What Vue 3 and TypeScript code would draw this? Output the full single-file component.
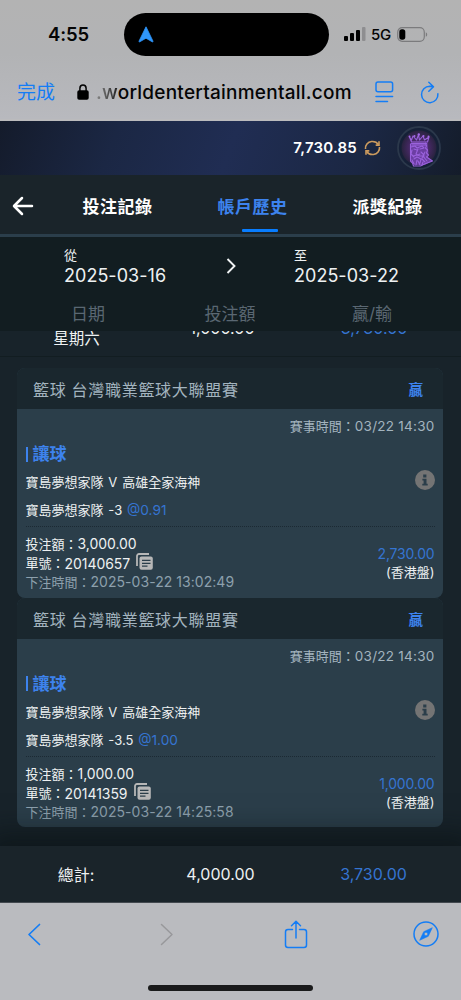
<script setup lang="ts">
interface Bet {
  id: string
  pick: string
  odds: string
  stake: string
  placed: string
  win: string
}

const league = '籃球 台灣職業籃球大聯盟賽'
const teams = '寶島夢想家隊 V 高雄全家海神'
const bets: Bet[] = [
  { id: '20140657', pick: '寶島夢想家隊 -3', odds: '@0.91', stake: '3,000.00', placed: '2025-03-22 13:02:49', win: '2,730.00' },
  { id: '20141359', pick: '寶島夢想家隊 -3.5', odds: '@1.00', stake: '1,000.00', placed: '2025-03-22 14:25:58', win: '1,000.00' },
]
</script>

<template>
  <div class="phone">
    <header class="browser">
      <div class="status">
        <span class="clock">4:55</span>
        <div class="island">
          <svg width="16" height="17" viewBox="0 0 16 17"><path d="M8 .8 15 15.2c.2.6-.3.9-.8.6L8 12.2 1.800 15.800c-.5.3-1 0-.8-.6z" fill="#2f96fb" stroke="#2f96fb" stroke-width=".8" stroke-linejoin="round" /></svg>
        </div>
        <svg class="signal" width="22" height="15" viewBox="0 0 22 15">
          <rect x="0" y="9" width="4" height="5" rx="1" /><rect x="6" y="6" width="4" height="8" rx="1" /><rect x="12" y="3" width="4" height="11" rx="1" /><rect x="18" y="0" width="3.500" height="14" rx="1" fill="#8e8e90" />
        </svg>
        <span class="net">5G</span>
        <svg class="battery" width="31" height="15" viewBox="0 0 31 15">
          <rect x=".7" y=".7" width="26.600" height="13.600" rx="4.500" fill="none" stroke="#7b7b7d" stroke-width="1.200" />
          <rect x="2.300" y="2.300" width="6" height="10.400" rx="2.600" /><path d="M28.800 5.200c1.900.8 1.900 3.800 0 4.600z" fill="#7b7b7d" />
        </svg>
      </div>
      <div class="address">
        <span class="done">完成</span>
        <svg class="lock" width="12" height="16" viewBox="0 0 12 16"><rect x=".3" y="6.300" width="11.400" height="9.400" rx="1.800" /><path d="M2.900 7V4.300a3.100 3.300 0 0 1 6.200 0V7" fill="none" stroke="#050505" stroke-width="1.500" /></svg>
        <span class="url"><i>.w</i>orldentertainmentall.com</span>
        <svg class="reader" width="19" height="22" viewBox="0 0 19 22" fill="none" stroke="#147df5" stroke-width="1.500" stroke-linecap="round"><rect x="1" y="1" width="16.600" height="9.700" rx="2" /><path d="M1 15.500h16.600M1 20.500h11.500" /></svg>
        <svg class="reload" width="20" height="23" viewBox="0 0 20 23" fill="none" stroke="#147df5" stroke-width="1.500" stroke-linecap="round" stroke-linejoin="round"><path d="M17.900 12.800A8.200 8.200 0 1 1 9.700 5.300l3.400.3M8.800 1.200l4.700 4.500-4.700 4.600" /></svg>
      </div>
    </header>

    <section class="account">
      <span class="balance">7,730.85</span>
      <svg class="sync" width="17" height="16" viewBox="0 0 17 16" fill="none" stroke="#cc9b5e" stroke-width="1.600"><path d="M1.500 9A6.700 6.700 0 0 1 7.500 1.500C10.500 1.200 13 2.300 14.300 4.500M15.500 7A6.700 6.700 0 0 1 9.500 14.500C6.500 14.800 4 13.700 2.700 11.500" /><path d="M15 1.200v3.900h-3.300M2 14.800v-3.900h3.300" /></svg>
      <svg class="avatar" width="46" height="46" viewBox="0 0 46 46" fill="none" stroke-linecap="round" stroke-linejoin="round">
        <defs><radialGradient id="glow"><stop offset="0" stop-color="#60358b" /><stop offset=".65" stop-color="#40275c" /><stop offset="1" stop-color="#28233e" /></radialGradient></defs>
        <circle cx="23" cy="23" r="21" fill="#152037" stroke="#2b384b" stroke-width="1.800" /><circle cx="23" cy="23" r="17.500" fill="url(#glow)" />
        <path d="M14.500 18h17l1 10-1 4 5 4-8 4H18l-3.500-6z" fill="#6c3ea3" />
        <g stroke="#9a62dc" stroke-width="1.100">
          <path d="m13.500 12 2 5h16l1.500-5-4.500 3-1.500-4-3.500 4-1-5-2 5-3.500-4-1.500 4zM15.500 18.500h15M16 20h14" />
          <path d="M14.500 19v17l2 2 1 3h7l4-2 8-3-3-2-3-2 2-2-2-2 1-3-2-2 1-2-1-3" />
          <path d="m15 22 4-1 2 2 5-2 2 2M18 24l3 1M24 24l4-1M22 24l-2 5 2 1 2-1M16 25l-1 4 3 3M25 27l3 3-2 3M17 31l4-1 3 1 4 0M18 34l3-2 4 2-1 4M16 35l2 4M21 35l-1 5M26 34l3 3M29 27l-2 4 4 5M22 36l2 4M27 37l-1 3" />
        </g>
        <g fill="#a36be6"><circle cx="13.500" cy="11.500" r="1" /><circle cx="18.500" cy="11" r="1" /><circle cx="22.800" cy="9.500" r="1.200" /><circle cx="27.500" cy="11" r="1" /><circle cx="32.500" cy="11.500" r="1" /></g>
      </svg>
    </section>

    <nav class="tabs">
      <svg class="back" width="22" height="20" viewBox="0 0 22 20" fill="none" stroke="#fff" stroke-width="2.500" stroke-linecap="round" stroke-linejoin="round"><path d="M10 2 2 10l8 8M2.500 10H20" /></svg>
      <span class="tab">投注記錄</span>
      <span class="tab active">帳戶歷史</span>
      <span class="tab">派獎紀錄</span>
    </nav>

    <section class="range">
      <div class="date"><small>從</small><span>2025-03-16</span></div>
      <svg class="chev" width="11" height="16" viewBox="0 0 11 16" fill="none" stroke="#f0f3f4" stroke-width="1.900"><path d="m1.500 1 7 7-7 7" /></svg>
      <div class="date to"><small>至</small><span>2025-03-22</span></div>
    </section>
    <div class="heads"><span>日期</span><span>投注額</span><span>贏/輸</span></div>

    <main class="list">
      <div class="day"><span class="weekday">星期六</span><span class="sum">1,000.00</span><span class="sum gain">3,730.00</span></div>
      <div class="cards">
        <article v-for="bet in bets" :key="bet.id" class="card">
          <div class="card-head"><span>{{ league }}</span><b>贏</b></div>
          <div class="card-body">
            <div class="time">賽事時間：<em>03/22 14:30</em></div>
            <div class="market">讓球</div>
            <div class="teams"><span>{{ teams }}</span>
              <svg width="20" height="20" viewBox="0 0 20 20"><circle cx="10" cy="10" r="10" fill="#747474" /><path d="M8.200 4.400h3.200v3H8.200zM7.400 8.700h4.100v5h1.200v1.900H7.300v-1.900h1.300v-3.100H7.400z" fill="#2b3e4a" /></svg>
            </div>
            <div class="pick">{{ bet.pick }} <span>{{ bet.odds }}</span></div>
            <div class="detail">
              <div>
                <div>投注額：<em>{{ bet.stake }}</em></div>
                <div class="slip">單號：<em>{{ bet.id }}</em>
                  <svg width="17" height="17" viewBox="0 0 17 17"><path d="M1 13V3a2 2 0 0 1 2-2h10" fill="none" stroke="#b7b7b7" stroke-width="1.800" /><rect x="3.500" y="3.500" width="13.300" height="13.300" rx="2" fill="#b7b7b7" /><path d="M6 7.400h8.500M6 10.300h8.500M6 13.200h5.500" stroke="#2b3e4a" stroke-width="1.300" /></svg>
                </div>
                <div class="placed">下注時間：<em>{{ bet.placed }}</em></div>
              </div>
              <div class="result"><em>{{ bet.win }}</em><span>(香港盤)</span></div>
            </div>
          </div>
        </article>
      </div>
    </main>

    <section class="total"><span>總計:</span><span>4,000.00</span><span class="gain">3,730.00</span></section>

    <footer class="toolbar">
      <div class="tools">
        <svg width="14" height="23" viewBox="0 0 14 23" fill="none" stroke="#147df5" stroke-width="1.700" stroke-linecap="round" stroke-linejoin="round"><path d="M12.500 1.500 2 11.500l10.500 10" /></svg>
        <svg class="fwd" width="14" height="23" viewBox="0 0 14 23" fill="none" stroke="#98989b" stroke-width="1.500" stroke-linecap="round" stroke-linejoin="round"><path d="m1.500 1.500 10.500 10-10.500 10" /></svg>
        <svg class="share" width="24" height="29" viewBox="0 0 24 29" fill="none" stroke="#147df5" stroke-width="1.500" stroke-linecap="round" stroke-linejoin="round"><path d="M8.500 9.500H4a2.500 2.500 0 0 0-2.500 2.500v13A2.500 2.500 0 0 0 4 27.500h16a2.500 2.500 0 0 0 2.500-2.500V12A2.500 2.500 0 0 0 20 9.500h-4.500M12 18V1.500M7.500 5.700 12 1.300l4.500 4.400" /></svg>
        <svg class="safari" width="26" height="26" viewBox="0 0 26 26"><circle cx="13" cy="13" r="12" fill="none" stroke="#147df5" stroke-width="1.500" /><path fill-rule="evenodd" d="m19.300 6.700-4 8.600-8.600 4 4-8.600zM13 11.200a1.800 1.800 0 1 0 0 3.600 1.800 1.800 0 0 0 0-3.600z" fill="#147df5" stroke="#147df5" stroke-width=".6" stroke-linejoin="round" /></svg>
      </div>
      <div class="home"></div>
    </footer>
  </div>
</template>

<style>
html, body { background: #1a242a; overflow: hidden; }
</style>

<style scoped>
.phone { width: 461px; height: 1000px; overflow: hidden; display: flex; flex-direction: column; background: #1a242a; color: #eef1f2; font-family: Inter, "Noto Sans CJK TC", sans-serif; }
.phone * { box-sizing: border-box; white-space: nowrap; }
svg { display: block; flex: none; }
em, i { font-style: normal; }
.browser { height: 121px; flex: none; background: linear-gradient(#b3b3b3, #b2b3b5 45%, #b8b9be); color: #050505; border-bottom: 2px solid #bbbbbd; }
.status { display: flex; align-items: center; height: 56px; padding: 13px 0 0 48px; }
.clock { width: 76px; padding-bottom: 1px; font-size: 18.500px; font-weight: 600; letter-spacing: -.1px; }
.island { width: 205px; height: 43px; border-radius: 22px; background: #000; padding: 13px 0 0 14px; }
.signal { margin-left: 15px; }
.net { margin-left: 5px; width: 26px; font-size: 15px; font-weight: 500; letter-spacing: -.2px; }
.address { display: flex; align-items: center; height: 48px; padding: 0 0 0 17px; margin-top: 12px; }
.done { width: 60px; padding-top: 2px; color: #147df5; font-size: 19px; line-height: 28px; }
.url { margin-left: 7px; width: 264px; font-size: 19px; font-weight: 500; letter-spacing: .24px; }
.url i { background: linear-gradient(90deg, #888, #222); background-clip: text; color: transparent; }
.reader { margin-left: 15px; }
.reload { margin-left: 26px; }
.account { height: 54px; flex: none; display: flex; align-items: center; justify-content: flex-end; padding-right: 19px; background: linear-gradient(110deg, #141b2b, #1b2744 25%, #202d53 50%, #1b2743 78%, #141c2a); }
.balance { padding-bottom: 1px; font-size: 15px; font-weight: 600; color: #fff; letter-spacing: .2px; }
.sync { margin-left: 7px; }
.avatar { margin-left: 15px; }
.tabs { height: 62px; flex: none; display: flex; align-items: center; background: #1a242a; border-bottom: 3px solid #2b3e4b; padding: 3px 0 0 12px; }
.back { margin-right: 16px; }
.tab { position: relative; width: 135px; padding-top: 1px; text-align: center; font-size: 17px; line-height: 24px; font-weight: 700; letter-spacing: .5px; color: #fff; }
.active { color: #3d83ee; }
.active::after { content: ""; position: absolute; left: 57px; bottom: -13px; width: 36px; height: 2.500px; border-radius: 1px; background: #087dff; }
.range { height: 57px; flex: none; display: flex; background: #121d21; padding-left: 64px; }
.date { width: 162px; padding-top: 10px; display: flex; flex-direction: column; }
.date small { font-size: 13px; line-height: 17px; }
.date span { font-size: 18px; line-height: 23px; letter-spacing: .03px; }
.chev { margin-top: 21px; }
.to { margin-left: 57px; }
.heads { height: 37px; flex: none; padding: 8px 0 0 17px; display: grid; grid-template-columns: repeat(3, 142px); text-align: center; background: #121d21; color: #5a6772; font-size: 17px; line-height: 24px; }
.list { height: 515px; flex: none; overflow: hidden; background: #18232a; }
.day { height: 26px; display: grid; grid-template-columns: repeat(3, 142px); padding-left: 17px; border-bottom: 1px solid #121d21; text-align: center; }
.weekday { margin-left: -23px; margin-top: -4px; line-height: 24px; font-size: 15.500px; }
.sum { font-size: 16px; margin: -15px 0 0 -16px; line-height: 24px; }
.sum.gain { margin-left: 4px; }
.gain { color: #3574d1; }
.cards { padding: 11px 18px 22px 17px; }
.card { height: 229.500px; border-radius: 8px; overflow: hidden; background: #2b3e4a; }
.card-head { height: 41px; display: flex; justify-content: space-between; padding: 2px 20px 0 16px; line-height: 40px; background: #1a272e; color: #a3b4bf; font-size: 16px; letter-spacing: .7px; }
.card-head b { color: #3d83ee; font-size: 14.500px; letter-spacing: 0; }
.card-body { padding: 8px 8.500px 0; font-size: 13px; }
.time { text-align: right; line-height: 18px; color: #a3b4bf; }
.time em { font-size: 13.500px; letter-spacing: .25px; }
.market { margin-top: 9px; height: 20px; display: flex; align-items: center; color: #3d83ee; font-size: 17px; font-weight: 700; line-height: 20px; }
.market::before { content: ""; width: 2px; height: 15px; margin-right: 5px; background: #3d83ee; }
.teams { margin-top: 6px; height: 26px; line-height: 26px; display: flex; justify-content: space-between; word-spacing: 1.200px; }
.teams span { margin-top: -1px; }
.pick { height: 31px; line-height: 29px; border-bottom: 1.500px dotted #1b2933; word-spacing: 1.200px; }
.pick span { color: #3574d1; font-size: 13.700px; }
.detail { display: flex; justify-content: space-between; padding-top: 7px; line-height: 19px; }
.detail em { font-size: 14px; letter-spacing: -.05px; }
.slip { display: flex; align-items: center; height: 19px; }
.slip svg { margin: -4px 0 0 6px; }
.placed { margin-top: -1px; color: #8da0ad; }
.detail .placed em { letter-spacing: .04px; }
.result { padding-top: 11px; text-align: right; line-height: 18px; display: flex; flex-direction: column; }
.detail .result em { color: #3574d1; letter-spacing: -.2px; }
.total { position: relative; height: 57px; flex: none; display: grid; grid-template-columns: 152px 137px 169px; align-items: center; text-align: center; font-size: 16px; background: #1a242a; border-bottom: 1px solid #43494f; box-shadow: 0 0 26px 14px rgba(8, 14, 16, .55); }
.toolbar { position: relative; height: 97px; flex: none; background: #babbbf; }
.tools { height: 62px; display: flex; align-items: center; padding-left: 27px; }
.fwd { margin-left: 119px; }
.share { margin-left: 110px; }
.safari { margin-left: 105px; }
.home { width: 165px; height: 6px; margin: 20px auto 0; border-radius: 3px; background: #1a1a1b; }
</style>
